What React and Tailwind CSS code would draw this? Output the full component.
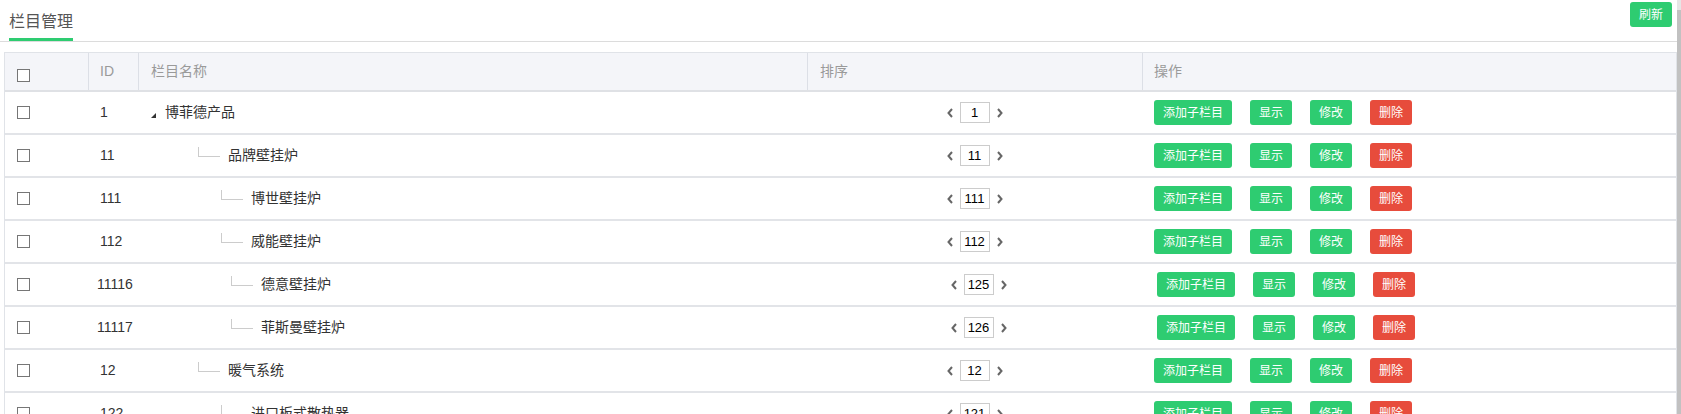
import React from "react";

const rows = [
  { id: "1", name: "博菲德产品", level: 0, sort: "1", idCls: "pl-[12px]", nameCls: "pl-[13px]", sortCls: "", opsCls: "pl-[12px]" },
  { id: "11", name: "品牌壁挂炉", level: 1, sort: "11", idCls: "pl-[12px]", nameCls: "pl-[60px]", sortCls: "", opsCls: "pl-[12px]" },
  { id: "111", name: "博世壁挂炉", level: 2, sort: "111", idCls: "pl-[12px]", nameCls: "pl-[83px]", sortCls: "", opsCls: "pl-[12px]" },
  { id: "112", name: "威能壁挂炉", level: 2, sort: "112", idCls: "pl-[12px]", nameCls: "pl-[83px]", sortCls: "", opsCls: "pl-[12px]" },
  { id: "11116", name: "德意壁挂炉", level: 2, sort: "125", idCls: "pl-[9px]", nameCls: "pl-[93px]", sortCls: "pl-[8px]", opsCls: "pl-[15px]" },
  { id: "11117", name: "菲斯曼壁挂炉", level: 2, sort: "126", idCls: "pl-[9px]", nameCls: "pl-[93px]", sortCls: "pl-[8px]", opsCls: "pl-[15px]" },
  { id: "12", name: "暖气系统", level: 1, sort: "12", idCls: "pl-[12px]", nameCls: "pl-[60px]", sortCls: "", opsCls: "pl-[12px]" },
  { id: "122", name: "进口板式散热器", level: 2, sort: "121", idCls: "pl-[12px]", nameCls: "pl-[83px]", sortCls: "", opsCls: "pl-[12px]" },
];

function Box() {
  return <span className="block h-[13px] w-[13px] shrink-0 border border-[#767676] bg-white" />;
}

function Chevron({ dir }) {
  return (
    <svg width="6" height="10" viewBox="0 0 6 10" className="shrink-0">
      <polyline
        points={dir === "left" ? "5,1 1.5,5 5,9" : "1,1 4.5,5 1,9"}
        fill="none"
        stroke="#666"
        strokeWidth="2"
      />
    </svg>
  );
}

function Btn({ children, red }) {
  return (
    <span
      className={
        red
          ? "flex h-[25px] items-center rounded-[3px] bg-[#e74c3c] px-[9px] text-[12px] text-white"
          : "flex h-[25px] items-center rounded-[3px] bg-[#2ecc71] px-[9px] text-[12px] text-white"
      }
    >
      {children}
    </span>
  );
}

export default function App() {
  return (
    <div className="flex h-[414px] w-full overflow-hidden bg-white font-['Liberation_Sans','Noto_Sans_CJK_SC',sans-serif] text-[#333]">
      <div className="min-w-0 flex-1">
        {/* title bar */}
        <div className="flex h-[42px] items-end justify-between border-b border-[#dcdcdc]">
          <div className="ml-[9px] border-b-[3px] border-[#2ecc71] pb-[5px] text-[16px] leading-[22px] text-[#555]">
            栏目管理
          </div>
          <div className="mr-[5px] self-start pt-[2px]">
            <Btn>刷新</Btn>
          </div>
        </div>

        {/* table */}
        <div className="ml-[4px] mt-[10px] border-l border-r border-t border-[#e0e3e8]">
          <div className="grid h-[39px] grid-cols-[83px_50px_669px_335px_1fr] border-b-2 border-[#dfe1e5] bg-[#f4f5f9] text-[14px] text-[#9a9a9a]">
            <div className="flex items-center pl-[12px] pt-[8px]">
              <Box />
            </div>
            <div className="flex items-center border-l border-[#dcdfe6] pl-[11px]">ID</div>
            <div className="flex items-center border-l border-[#dcdfe6] pl-[12px]">栏目名称</div>
            <div className="flex items-center border-l border-[#dcdfe6] pl-[12px]">排序</div>
            <div className="flex items-center border-l border-[#dcdfe6] pl-[11px]">操作</div>
          </div>

          {rows.map((r) => (
            <div
              key={r.id}
              className="grid h-[43px] grid-cols-[83px_50px_669px_335px_1fr] border-b-2 border-[#e2e4e8] text-[14px]"
            >
              <div className="flex items-center pl-[12px]">
                <Box />
              </div>
              <div className={"flex items-center " + r.idCls}>{r.id}</div>
              <div className={"flex items-center " + r.nameCls}>
                {r.level === 0 ? (
                  <svg width="5" height="5" viewBox="0 0 5 5" className="mr-[9px] mt-[5px] shrink-0">
                    <polygon points="5,0 5,5 0,5" fill="#333" />
                  </svg>
                ) : (
                  <span className="mb-[7px] mr-[8px] h-[10px] w-[22px] shrink-0 border-b border-l border-[#cccccc]" />
                )}
                <span>{r.name}</span>
              </div>
              <div className={"flex items-center justify-center gap-[7px] " + r.sortCls}>
                <Chevron dir="left" />
                <span className="flex h-[21px] w-[30px] items-center justify-center border border-[#cccccc] text-[13px] text-black">
                  {r.sort}
                </span>
                <Chevron dir="right" />
              </div>
              <div className={"flex items-center gap-[18px] " + r.opsCls}>
                <Btn>添加子栏目</Btn>
                <Btn>显示</Btn>
                <Btn>修改</Btn>
                <Btn red>删除</Btn>
              </div>
            </div>
          ))}
        </div>
      </div>
      <div className="flex w-[4px] shrink-0 flex-col">
        <div className="h-[10px] bg-[#e6e6e6]" />
        <div className="flex-1 bg-[#c1c1c1]" />
      </div>
    </div>
  );
}
